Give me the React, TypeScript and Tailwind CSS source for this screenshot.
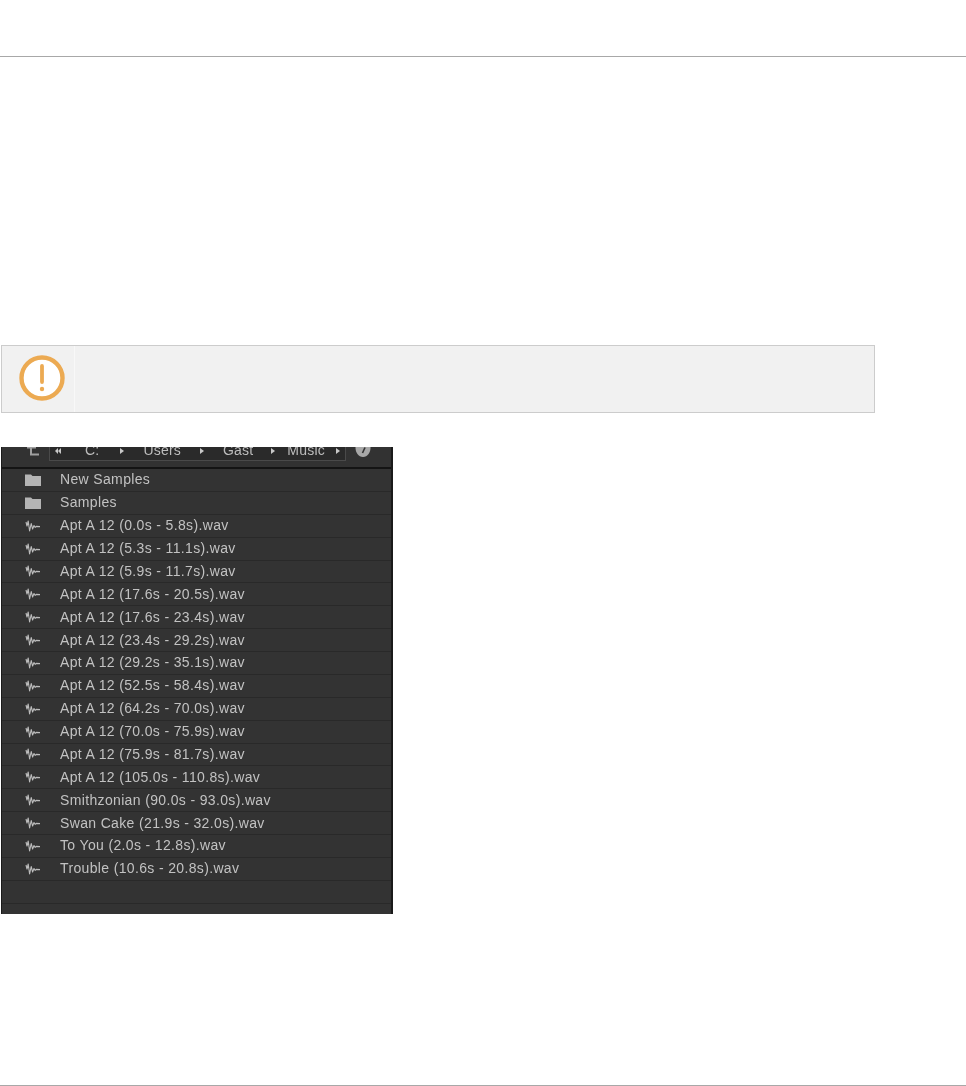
const files = [
  'Apt A 12 (0.0s - 5.8s).wav',
  'Apt A 12 (5.3s - 11.1s).wav',
  'Apt A 12 (5.9s - 11.7s).wav',
  'Apt A 12 (17.6s - 20.5s).wav',
  'Apt A 12 (17.6s - 23.4s).wav',
  'Apt A 12 (23.4s - 29.2s).wav',
  'Apt A 12 (29.2s - 35.1s).wav',
  'Apt A 12 (52.5s - 58.4s).wav',
  'Apt A 12 (64.2s - 70.0s).wav',
  'Apt A 12 (70.0s - 75.9s).wav',
  'Apt A 12 (75.9s - 81.7s).wav',
  'Apt A 12 (105.0s - 110.8s).wav',
  'Smithzonian (90.0s - 93.0s).wav',
  'Swan Cake (21.9s - 32.0s).wav',
  'To You (2.0s - 12.8s).wav',
  'Trouble (10.6s - 20.8s).wav',
];

function FolderIcon() {
  return (
    <svg width="16" height="12" viewBox="0 0 16 12" className="blur-[0.3px]">
      <path d="M0 0.5h6l1.5 1.5h8.5v10h-16z" fill="#b4b4b4" />
    </svg>
  );
}

function WaveIcon() {
  return (
    <svg width="16" height="12" viewBox="0 0 16 12" fill="none" stroke="#bcbcbc" strokeWidth="1.1" strokeLinejoin="round" className="blur-[0.4px]">
      <path d="M1 2 L2 6 L3.2 1 L4.6 11 L6.2 3.5 L7.6 9 L9 5.5 L10.2 7.4 L11.2 6.4 L15 6.6" />
    </svg>
  );
}

function Arrow({ left }: { left: string }) {
  return (
    <span className={`flex h-[7px] items-center ${left}`}>
      <span className="block h-0 w-0 border-y-[3px] border-l-[4px] border-y-transparent border-l-[#c8c8c8]" />
    </span>
  );
}

function Row({ icon, label }: { icon?: React.ReactNode; label?: string }) {
  return (
    <div className="flex h-[22.88px] shrink-0 items-center border-b border-[#292929] bg-[#333333]">
      <div className="flex w-[58px] justify-center pl-[4px]">{icon}</div>
      <span className="text-[14px] tracking-[0.35px] text-[#c2c2c2] blur-[0.4px]">{label}</span>
    </div>
  );
}

export default function App() {
  return (
    <div className="flex h-[1086px] w-[966px] flex-col overflow-hidden bg-white font-['Liberation_Sans',sans-serif]">
      <div className="mt-[56px] h-px bg-[#a8a8a8]" />

      <div className="ml-px mt-[288px] flex h-[68px] w-[874px] border border-[#cccccc] bg-[#f1f1f1]">
        <div className="flex w-[73px] items-center justify-center border-r border-[#f8f8f8] pb-[3px] pl-[10px] pr-[2px]">
          <svg width="46" height="46" viewBox="0 0 46 46">
            <circle cx="23" cy="23" r="20.5" fill="#ffffff" stroke="#ecaa52" strokeWidth="4.4" />
            <path d="M23 11v16" stroke="#ecaa52" strokeWidth="3.8" strokeLinecap="round" />
            <circle cx="23" cy="34" r="2.2" fill="#ecaa52" />
          </svg>
        </div>
      </div>

      <div className="ml-px mt-[34px] flex h-[467px] w-[392px] flex-col overflow-hidden border-y-0 border-l border-r-2 border-[#1a1a1a] bg-[#333333]">
        <div className="flex h-[22px] shrink-0 items-start border-b-2 border-[#141414] bg-[#323232]">
          <div className="flex w-[47px] justify-start pl-[22px]">
            <svg width="15" height="9" viewBox="0 0 15 9" fill="none" stroke="#a0a0a0" strokeWidth="2" className="blur-[0.4px]">
              <path d="M3 0.5h9M7 0v7.5h8" />
            </svg>
          </div>
          <div className="flex h-[14px] w-[297px] items-start border-b border-l border-r border-[#4a4a4a] bg-[#2a2a2a] text-[14px] leading-[7px] tracking-[0.2px] text-[#bdbdbd] blur-[0.3px]">
            <span className="ml-[5px] flex h-[7px] items-center">
              <span className="block h-0 w-0 border-y-[3px] border-r-[3px] border-y-transparent border-r-[#c8c8c8]" />
              <span className="block h-0 w-0 border-y-[3px] border-r-[3px] border-y-transparent border-r-[#c8c8c8]" />
            </span>
            <span className="ml-[24px]">C:</span>
            <Arrow left="ml-[21px]" />
            <span className="ml-[19px]">Users</span>
            <Arrow left="ml-[19px]" />
            <span className="ml-[19px]">Gast</span>
            <Arrow left="ml-[18px]" />
            <span className="ml-[12px]">Music</span>
            <Arrow left="ml-[11px]" />
          </div>
          <div className="flex flex-1 justify-start pl-[9px]">
            <svg width="16" height="10" viewBox="0 0 16 10" className="blur-[0.3px]">
              <path d="M0.5 0h15c0.3 5.5-3 10-7.5 10S0.2 5.5 0.5 0z" fill="#a8a8a8" />
              <path d="M10 0.5 L7.5 6" stroke="#333333" strokeWidth="1.6" fill="none" />
            </svg>
          </div>
        </div>
        <Row icon={<FolderIcon />} label="New Samples" />
        <Row icon={<FolderIcon />} label="Samples" />
        {files.map((f) => (
          <Row key={f} icon={<WaveIcon />} label={f} />
        ))}
        <Row />
        <Row />
      </div>

      <div className="mt-[171px] h-px bg-[#a8a8a8]" />
    </div>
  );
}
